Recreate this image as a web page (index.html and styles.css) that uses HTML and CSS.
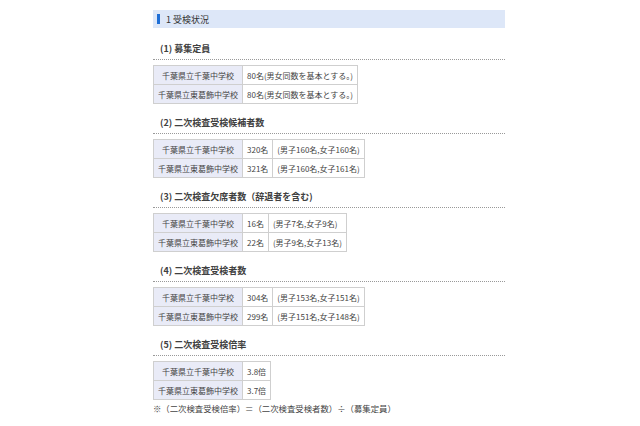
FILE: index.html
```html
<!DOCTYPE html>
<html lang="ja">
<head>
<meta charset="utf-8">
<title>受検状況</title>
<link rel="stylesheet" href="styles.css">
</head>
<body>
<div class="page">
  <h2 class="bar"><span class="mark"></span>1 受検状況</h2>

  <section class="sec">
    <h3 class="head">(1) 募集定員</h3>
    <table class="tbl">
      <tr><th>千葉県立千葉中学校</th><td>80名(男女同数を基本とする。)</td></tr>
      <tr><th>千葉県立東葛飾中学校</th><td>80名(男女同数を基本とする。)</td></tr>
    </table>
  </section>

  <section class="sec">
    <h3 class="head">(2) 二次検査受検候補者数</h3>
    <table class="tbl">
      <tr><th>千葉県立千葉中学校</th><td>320名</td><td>(男子160名,女子160名)</td></tr>
      <tr><th>千葉県立東葛飾中学校</th><td>321名</td><td>(男子160名,女子161名)</td></tr>
    </table>
  </section>

  <section class="sec">
    <h3 class="head">(3) 二次検査欠席者数（辞退者を含む)</h3>
    <table class="tbl">
      <tr><th>千葉県立千葉中学校</th><td>16名</td><td>(男子7名,女子9名)</td></tr>
      <tr><th>千葉県立東葛飾中学校</th><td>22名</td><td>(男子9名,女子13名)</td></tr>
    </table>
  </section>

  <section class="sec">
    <h3 class="head">(4) 二次検査受検者数</h3>
    <table class="tbl">
      <tr><th>千葉県立千葉中学校</th><td>304名</td><td>(男子153名,女子151名)</td></tr>
      <tr><th>千葉県立東葛飾中学校</th><td>299名</td><td>(男子151名,女子148名)</td></tr>
    </table>
  </section>

  <section class="sec">
    <h3 class="head">(5) 二次検査受検倍率</h3>
    <table class="tbl">
      <tr><th>千葉県立千葉中学校</th><td>3.8倍</td></tr>
      <tr><th>千葉県立東葛飾中学校</th><td>3.7倍</td></tr>
    </table>
  </section>

  <p class="note">※（二次検査受検倍率）＝（二次検査受検者数）÷（募集定員）</p>
</div>
</body>
</html>
```

FILE: styles.css
```css
html, body {
  margin: 0;
  padding: 0;
  background: #ffffff;
}
body {
  font-family: "Noto Sans CJK JP", "Noto Sans", sans-serif;
  color: #3a3a3a;
}
.page {
  width: 352px;
  margin-left: 153px;
  padding-top: 10px;
}
.bar {
  margin: 0;
  height: 18px;
  background: #dde7f8;
  display: flex;
  align-items: center;
  font-size: 9px;
  font-weight: normal;
  color: #333;
  padding-left: 4px;
}
.mark {
  width: 3px;
  height: 10px;
  background: #1f6fd6;
  margin-right: 6px;
}
.sec {
  margin-top: 11px;
}
.sec + .sec {
  margin-top: 9px;
}
.head {
  margin: 0;
  height: 20px;
  line-height: 20px;
  font-size: 9px;
  font-weight: bold;
  color: #404040;
  padding-left: 7px;
  border-bottom: 1px dotted #999;
}
.tbl {
  margin-top: 5px;
  border-collapse: collapse;
  font-size: 8px;
}
.tbl th, .tbl td {
  border: 1px solid #cfcfcf;
  height: 18px;
  padding: 0 4px;
  white-space: nowrap;
  font-weight: normal;
  color: #444;
}
.tbl th {
  background: #e9ebf7;
  text-align: center;
}
.tbl td {
  background: #fff;
  text-align: left;
}
.note {
  margin: 0;
  line-height: 16px;
  font-size: 8.4px;
  color: #444;
}
```
